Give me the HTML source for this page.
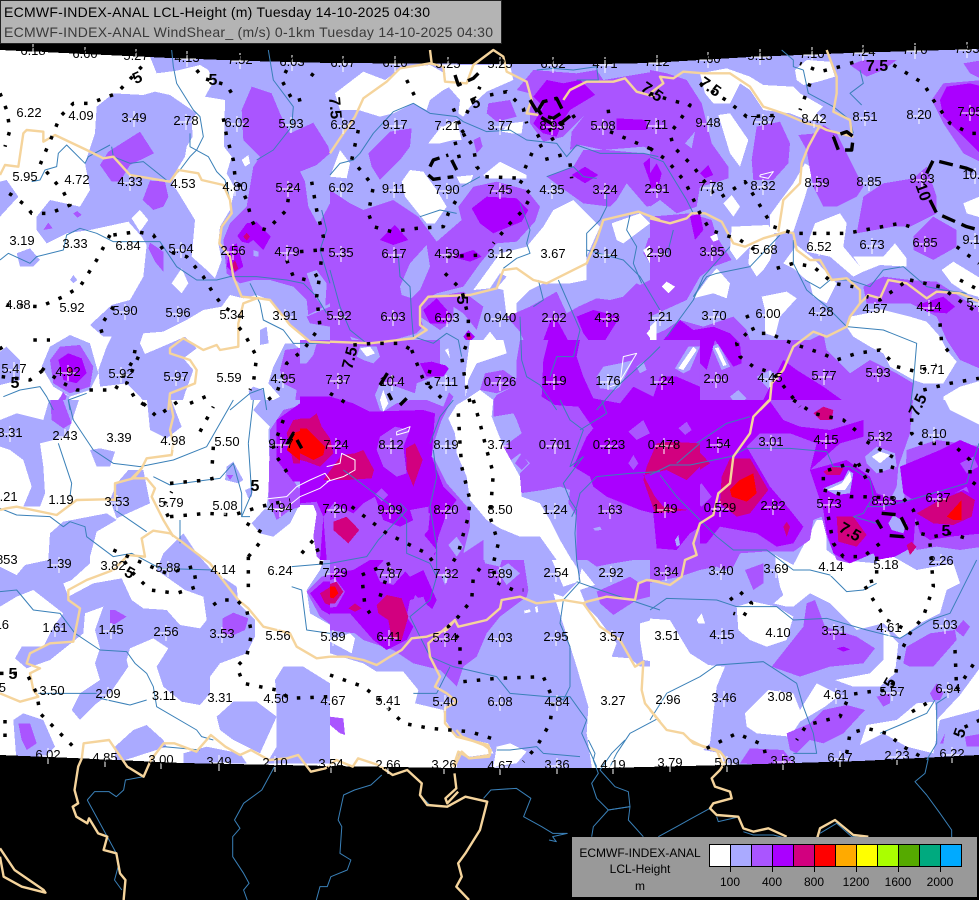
<!DOCTYPE html>
<html><head><meta charset="utf-8"><title>ECMWF-INDEX-ANAL LCL-Height</title>
<style>
html,body{margin:0;padding:0;background:#000}
svg{display:block}
text{font-family:"Liberation Sans",sans-serif;font-size:13px;text-anchor:middle;fill:#000}
.bt{font-weight:bold;font-size:16px}
polygon{shape-rendering:crispEdges}
.w{fill:#fff}.l{fill:#aaaaff}.p{fill:#aa55ff}.v{fill:#aa00ff}.m{fill:#d2007f}.o{fill:#ff0000}
polyline{fill:none;vector-effect:non-scaling-stroke;stroke-linejoin:round}
.b{stroke:#f5d49c;stroke-width:2.4}
.r{stroke:#3a80b8;stroke-width:1}
.d{stroke:#000;stroke-width:3.5;stroke-dasharray:3.5 10}
.k{stroke:#000;stroke-width:3.4;stroke-dasharray:14 7}
.c{stroke:#fff;stroke-width:1}
</style></head><body>
<svg xmlns="http://www.w3.org/2000/svg" width="979" height="900" viewBox="0 0 979 900">
<defs>
<clipPath id="ca"><rect x="0" y="0" width="330" height="400"/></clipPath>
<clipPath id="cb"><rect x="330" y="0" width="320" height="400"/></clipPath>
<clipPath id="cc"><rect x="650" y="0" width="329" height="400"/></clipPath>
<clipPath id="cd"><rect x="0" y="400" width="330" height="400"/></clipPath>
<clipPath id="ce"><rect x="330" y="400" width="320" height="400"/></clipPath>
<clipPath id="cf"><rect x="650" y="400" width="329" height="400"/></clipPath>
<clipPath id="cg"><rect x="300" y="340" width="400" height="220"/></clipPath>
<path id="x" d="M-9 1h18M0-7v16" stroke="#fff" stroke-width="1" fill="none"/>
</defs>
<rect width="979" height="900" fill="#000"/>

<!-- tile A -->
<g clip-path="url(#ca)"><g transform="translate(0,50) scale(.33333)">
<rect x="0" y="-150" width="990" height="1300" class="w"/>
<polygon class="l" points="290,170 340,130 430,135 465,125 510,135 590,190 575,210 578,260 560,290 555,320 530,360 515,405 530,420 585,510 575,620 620,660 645,685 665,630 655,580 660,530 690,480 705,415 680,370 695,320 672,290 675,150 615,140 640,95 625,60 600,45 530,62 470,70 450,20 990,20 990,1080 760,1080 745,1020 650,800 610,780 560,810 490,845 430,850 420,880 435,912 510,880 555,860 590,895 550,925 580,960 555,1030 540,1080 450,1080 420,1040 380,1000 300,1010 295,960 320,890 335,860 310,860 270,825 335,765 390,750 430,680 440,585 425,560 385,515 270,540 200,550 140,580 110,540 110,500 150,450 240,470 270,420 255,340 285,250"/>
<polygon class="w" points="610,780 665,770 690,735 730,745 770,735 810,750 850,805 900,850 925,880 935,900 915,910 880,880 855,880 845,900 820,950 805,1000 840,1040 800,1060 790,1020 760,1010 740,1030 740,1090 560,1090 580,960 550,925 590,895 555,860 490,845 560,810"/>
<polygon class="w" points="395,505 420,480 445,510 420,545"/>
<polygon class="w" points="515,700 545,655 565,700 545,730"/>
<polygon class="w" points="725,330 745,315 750,340 735,350"/>
<polygon class="l" points="125,950 150,890 210,855 270,880 295,970 270,1020 210,1040 160,1010"/>
<polygon class="l" points="190,1030 210,1040 200,1060 195,1090 140,1090"/>
<polygon class="l" points="0,395 20,390 55,440 0,500"/>
<polygon class="l" points="50,610 90,595 120,630 100,650 60,650"/>
<polygon class="l" points="210,690 220,675 232,690 220,700"/>
<polygon class="l" points="0,905 20,890 60,930 60,990 0,1005"/>
<polygon class="l" points="780,840 800,830 806,880 780,885"/>
<polygon class="p" points="300,345 325,305 420,245 462,310 390,345 360,395 335,395"/>
<polygon class="p" points="428,450 450,392 495,395 505,440 490,470 460,480"/>
<polygon class="p" points="130,540 145,518 158,535"/>
<polygon class="p" points="220,490 232,483 245,495 232,503"/>
<polygon class="p" points="445,595 450,578 490,605 490,665 465,635"/>
<polygon class="p" points="725,180 755,110 815,130 840,190 870,250 940,218 985,290 990,310 950,345 900,365 915,395 925,470 955,525 990,460 990,760 925,795 920,750 880,710 810,690 760,690 720,700 680,670 670,570 690,520 740,470 760,350 780,320 730,270"/>
<polygon class="l" points="920,670 950,660 980,700 975,780 945,740"/>
<polygon class="l" points="760,600 775,605 775,620 760,618"/>
<polygon class="p" points="920,800 990,770 990,830 930,820"/>
<polygon class="p" points="855,900 990,880 990,1090 880,1090 890,1020 850,1000 840,960"/>
<polygon class="p" points="155,1090 190,1025 200,1040 180,1090"/>
<polygon class="p" points="150,930 180,890 240,885 280,950 270,1010 210,1030 160,1000"/>
<polygon class="v" points="175,930 205,910 245,925 260,970 230,1000 190,990"/>
<polygon class="m" points="200,960 208,952 216,962 208,972"/>
<polygon class="v" points="712,558 740,520 770,515 812,560 790,600 760,570 745,580 725,575"/>
<polygon class="m" points="730,560 740,548 750,560 740,572"/>
<polygon class="v" points="690,590 710,580 730,650 700,670 680,650"/>
<polygon class="m" points="695,645 705,630 715,655 705,665"/>
<polygon class="v" points="885,1090 910,1050 990,1040 990,1090"/>
</g></g>

<!-- tile B -->
<g clip-path="url(#cb)"><g transform="translate(330,50) scale(.33333)">
<rect x="-10" y="-50" width="1010" height="1150" class="l"/>
<polygon class="w" points="15,130 100,65 165,90 215,55 300,45 345,70 360,110 340,120 300,150 290,180 250,160 190,190 150,200 85,180 30,180"/>
<polygon class="w" points="340,45 540,45 550,90 470,125 420,170 400,200 385,190 390,150 355,110"/>
<polygon class="w" points="295,280 330,235 380,210 395,270 370,270 330,280"/>
<polygon class="w" points="515,245 540,220 580,215 575,250 545,250"/>
<polygon class="w" points="0,380 30,300 60,340 50,385"/>
<polygon class="w" points="215,395 240,360 280,365 320,420 350,470 315,520 290,520 265,490 225,440"/>
<polygon class="w" points="380,380 430,375 420,400 390,400"/>
<polygon class="w" points="460,375 510,335 590,375 590,385 470,385"/>
<polygon class="w" points="240,725 250,665 268,710 262,735"/>
<polygon class="w" points="430,720 510,610 590,590 640,530 670,480 730,450 810,530 770,620 770,690 720,700 640,700 600,720 560,760 560,785 600,810 570,845 530,800 520,720 500,715 530,680 510,670 480,715"/>
<polygon class="w" points="845,520 930,490 960,520 880,580 860,570"/>
<polygon class="p" points="955,565 1000,540 1000,700 960,640 940,610"/>
<polygon class="w" points="940,600 975,575 985,640 960,640"/>
<polygon class="p" points="900,720 960,690 1000,700 1000,780"/>
<polygon class="w" points="990,800 950,860 990,880"/>
<polygon class="w" points="380,1090 410,1000 420,920 480,845 530,910 470,940 460,1000 480,1040 480,1090"/>
<polygon class="w" points="90,900 110,890 135,910 120,920"/>
<polygon class="w" points="345,910 355,895 365,930"/>
<polygon class="w" points="150,1050 165,1030 170,1090 150,1070"/>
<polygon class="p" points="610,60 740,70 800,60 820,90 1000,60 1000,310 940,290 820,300 750,285 720,300 725,245 760,200 700,260 640,275 600,220 600,130 560,120"/>
<polygon class="p" points="650,380 730,350 760,300 830,300 940,310 1000,320 1000,460 950,470 890,400 860,450 840,470 760,460 690,410"/>
<polygon class="p" points="475,160 540,150 560,200 500,215 470,190"/>
<polygon class="p" points="115,310 180,245 245,235 240,290 210,330 150,390 125,350"/>
<polygon class="p" points="430,270 450,260 458,290 440,310"/>
<polygon class="p" points="0,420 60,460 100,480 190,450 265,500 320,575 395,510 385,470 430,410 500,395 590,420 630,470 615,515 560,575 500,580 450,640 400,710 320,730 290,745 270,800 280,830 260,850 190,870 120,880 60,860 0,880"/>
<polygon class="l" points="210,710 240,640 290,585 300,650 270,720 245,745 215,735"/>
<polygon class="p" points="270,800 290,745 400,725 460,770 440,840 400,790 370,770 370,810 330,840"/>
<polygon class="p" points="0,880 60,860 70,880 40,910 70,980 30,1020 0,1000"/>
<polygon class="p" points="140,930 200,920 210,960 150,960"/>
<polygon class="p" points="230,960 290,930 360,930 390,1010 350,1060 300,1040 260,1010"/>
<polygon class="p" points="600,770 680,725 710,790 745,770 800,745 840,750 880,740 920,700 960,720 1000,770 1000,1090 400,1090 480,1010 460,1040 600,1000 640,1010 570,845 530,800"/>
<polygon class="p" points="440,1030 480,940 560,930 610,950 600,1000 520,1040"/>
<polygon class="l" points="810,950 840,930 880,910 940,960 870,1010 810,1010"/>
<polygon class="l" points="760,880 775,890 770,905 762,900"/>
<polygon class="w" points="950,850 990,800 1000,880 980,890"/>
<polygon class="v" points="425,475 470,440 560,445 595,480 575,515 490,550 450,520"/>
<polygon class="v" points="150,570 195,525 235,570 190,585"/>
<polygon class="v" points="365,620 430,600 455,620 420,635"/>
<polygon class="v" points="280,780 320,745 360,790 350,820 300,820"/>
<polygon class="v" points="400,860 415,840 435,860 415,880"/>
<polygon class="m" points="410,860 418,852 426,862 416,872"/>
<polygon class="v" points="270,950 310,935 360,950 350,985 300,980"/>
<polygon class="v" points="740,800 790,780 870,800 820,880 790,890 760,850"/>
<polygon class="v" points="640,870 670,790 730,900 750,1000 720,1090 630,1090"/>
<polygon class="v" points="470,990 510,965 550,985 540,1010 490,1020"/>
<polygon class="v" points="860,205 950,210 950,240 860,240"/>
<polygon class="v" points="940,340 975,310 1000,320 1000,410 960,395"/>
<polygon class="v" points="725,375 765,350 805,375 765,400"/>
<polygon class="v" points="650,90 700,100 750,90 795,135 720,180 700,210 680,260 640,250 610,220 640,170 610,140"/>
<polygon class="v" points="780,1030 900,1020 930,1090 790,1090"/>
<polygon class="v" points="0,1050 40,1060 60,1090 0,1090"/>
</g></g>

<!-- tile C -->
<g clip-path="url(#cc)"><g transform="translate(650,50) scale(.33333)">
<rect x="-10" y="-50" width="1010" height="1150" class="l"/>
<polygon class="w" points="150,70 230,55 300,80 340,105 430,110 450,130 520,170 500,190 530,215 470,210 420,190 340,180 300,120 270,100 240,160 190,160 165,130"/>
<polygon class="w" points="435,60 470,30 540,35 555,80 505,95 460,105 440,90"/>
<polygon class="w" points="205,195 240,190 295,270 270,350 240,310"/>
<polygon class="w" points="360,495 400,440 430,400 465,340 490,355 465,440 430,545 360,550"/>
<polygon class="w" points="220,460 245,435 270,470 250,500"/>
<polygon class="w" points="245,530 355,525 380,560 360,630 340,660 320,680 295,640 300,590 260,630 240,600"/>
<polygon class="w" points="495,520 570,490 590,520 580,590 630,650 640,665 610,680 540,620 470,605 480,560"/>
<polygon class="w" points="610,620 700,620 735,580 770,625 770,650 690,645 640,665"/>
<polygon class="w" points="400,640 440,585 490,625 560,700 530,760 490,740 480,700 430,655"/>
<polygon class="w" points="335,740 410,725 440,745 390,800 375,860 345,850 345,780"/>
<polygon class="w" points="170,690 200,655 240,700 230,745 190,730 130,745"/>
<polygon class="w" points="35,710 50,695 75,710 55,730"/>
<polygon class="w" points="875,660 910,635 1000,690 1000,745 950,730 905,700"/>
<polygon class="w" points="940,460 1000,435 1000,505 950,490"/>
<polygon class="w" points="600,800 700,780 780,800 830,815 870,860 890,900 920,935 880,1000 820,1000 790,990 720,950 700,910 660,890 610,860 590,830"/>
<polygon class="w" points="880,1040 930,1010 1000,990 1000,1090 885,1090"/>
<polygon class="p" points="0,60 50,70 110,90 155,160 185,280 235,350 235,385 190,400 150,410 140,470 80,490 30,450 0,470"/>
<polygon class="l" points="105,280 135,245 125,295"/>
<polygon class="p" points="0,500 120,490 185,510 200,560 245,630 190,650 150,680 110,750 0,800"/>
<polygon class="w" points="35,710 50,695 75,710 55,730"/>
<polygon class="p" points="0,860 45,840 90,810 160,830 250,800 290,840 300,870 400,870 480,870 520,850 530,900 600,970 660,930 740,970 790,1000 780,1090 0,1090"/>
<polygon class="p" points="490,410 480,360 470,300 445,255 500,250 520,225 560,250 620,370 640,410 620,440 560,470 520,470"/>
<polygon class="p" points="305,330 320,230 390,215 420,280 415,340 370,390 310,390"/>
<polygon class="p" points="620,550 640,440 700,400 790,385 830,350 860,440 860,490 780,530 730,530"/>
<polygon class="p" points="790,560 850,500 920,540 920,590 850,630 790,600"/>
<polygon class="p" points="845,150 880,100 1000,90 1000,340 940,310 880,220"/>
<polygon class="p" points="940,40 1000,30 1000,90 960,70"/>
<polygon class="p" points="600,45 640,30 740,30 700,60 650,80"/>
<polygon class="p" points="640,710 700,680 780,690 860,695 960,760 1000,780 1000,960 930,930 890,870 860,800 780,760 720,760 650,760"/>
<polygon class="l" points="90,950 120,880 150,890 110,960"/>
<polygon class="w" points="100,935 125,895 135,900 110,945"/>
<polygon class="l" points="185,890 205,880 240,950 215,960"/>
<polygon class="w" points="195,895 205,892 230,945 220,948"/>
<polygon class="l" points="240,1040 265,1020 290,1045 265,1070"/>
<polygon class="l" points="320,980 360,960 395,990 360,1020"/>
<polygon class="w" points="0,830 20,810 20,880 0,890"/>
<polygon class="w" points="180,560 200,550 205,570 190,575"/>
<polygon class="v" points="880,200 870,150 890,110 960,100 1000,110 1000,320 930,250"/>
<polygon class="v" points="0,370 20,340 35,370 25,410 0,415"/>
<polygon class="v" points="120,500 150,490 160,540 135,570"/>
<polygon class="v" points="150,370 175,345 190,375 165,385"/>
<polygon class="v" points="40,870 90,810 130,840 190,830 240,850 270,880 275,940 250,950 195,870 170,960 150,940 130,880 100,890 80,960 40,900"/>
<polygon class="v" points="0,1000 70,960 110,990 130,1010 110,1090 0,1090"/>
<polygon class="v" points="320,1090 400,930 440,960 520,1010 590,1060 640,1090"/>
<polygon class="m" points="490,1090 520,1065 550,1090"/>
<polygon class="v" points="800,765 880,740 915,770 890,790 830,785"/>
</g></g>

<!-- tile D -->
<g clip-path="url(#cd)"><g transform="translate(0,400) scale(.33333)">
<rect x="0" y="-10" width="1000" height="1200" class="w"/>
<polygon class="l" points="0,60 50,40 130,60 150,-10 240,-10 200,110 120,130 130,200 135,280 120,320 70,320 95,260 70,180 30,150 0,140"/>
<polygon class="p" points="150,-10 185,-10 215,70 190,85 155,60"/>
<polygon class="l" points="270,150 300,145 345,155 330,200 290,200"/>
<polygon class="l" points="350,250 385,210 430,210 450,310 350,355 330,300"/>
<polygon class="l" points="440,-10 510,-10 545,80 500,115 450,90"/>
<polygon class="l" points="680,200 700,185 730,240 715,250 675,240"/>
<polygon class="p" points="680,225 700,225 690,240"/>
<polygon class="l" points="735,270 760,260 755,290 745,295"/>
<polygon class="l" points="470,510 490,460 530,420 550,400 590,460 635,510 710,560 715,610 765,660 765,710 740,760 660,790 630,830 630,880 600,915 545,905 490,860 470,800 505,745 460,715 390,745 380,780 385,800 330,880 290,910 240,960 215,930 240,880 300,840 285,790 300,745 285,690 310,620 255,640 250,700 225,720 150,780 80,805 45,775 65,740 130,740 160,680 190,640 100,570 50,590 0,620 0,500 50,525 75,495 145,480 150,400 190,365 320,340 350,360 290,395 270,470 270,490 215,540 190,550 205,590 280,550 365,535 395,600 430,625 500,630 540,675 600,685 620,660 610,590 555,570"/>
<polygon class="p" points="330,630 345,630 380,650 345,672 330,670"/>
<polygon class="p" points="668,655 700,638 745,655 735,690 690,710 668,700"/>
<polygon class="l" points="650,950 700,905 770,905 830,950 780,1060 700,1020 660,990"/>
<polygon class="l" points="825,840 850,800 910,800 990,850 1000,1090 800,1090 830,1040 830,900"/>
<polygon class="l" points="40,960 70,940 130,960 165,1040 120,1090 50,1090"/>
<polygon class="p" points="55,970 90,970 110,1030 80,1050 65,1020"/>
<polygon class="l" points="345,1040 400,990 440,975 490,1020 500,1040 345,1090"/>
<polygon class="l" points="550,1060 620,1040 720,1060 740,1090 550,1090"/>
<polygon class="l" points="945,330 975,310 1000,310 1000,680 930,640 920,570 960,510 975,470 965,400"/>
<polygon class="p" points="975,310 1000,310 1000,480 975,400"/>
<polygon class="l" points="850,-10 1000,-10 1000,320 900,310 870,370 820,410 780,400 755,370 800,320 810,230 805,90"/>
<polygon class="l" points="760,30 790,-10 850,-10 810,80 790,60"/>
<polygon class="p" points="810,90 850,30 1000,-10 1000,290 870,330 830,360 805,300"/>
<polygon class="l" points="880,240 925,230 920,262 895,265"/>
<polygon class="v" points="830,180 830,60 900,10 1000,-10 1000,240 880,245"/>
<polygon class="m" points="860,100 880,60 940,50 1000,90 1000,245 930,250 960,190 920,190 880,190"/>
<polygon class="o" points="860,150 880,100 920,85 975,150 960,185 910,190"/>
<polygon class="p" points="920,575 965,530 1000,520 1000,680 960,650"/>
<polygon class="v" points="930,580 970,545 1000,545 1000,650 965,630"/>
<polygon class="m" points="960,580 1000,555 1000,620 975,610"/>
</g></g>

<!-- tile E -->
<g clip-path="url(#ce)"><g transform="translate(330,400) scale(.33333)">
<rect x="-10" y="-10" width="1010" height="1200" class="l"/>
<polygon class="w" points="350,60 400,-10 490,-10 490,70 520,180 575,250 580,280 610,310 640,330 670,390 745,510 745,545 700,560 640,420 580,370 500,380 450,350 430,290 390,180 345,120"/>
<polygon class="w" points="670,580 700,590 745,545 755,505 795,555 750,570 770,620 800,650 860,730 845,770 900,775 930,800 1000,800 1000,1200 800,1200 770,1000 775,920 740,800 705,690"/>
<polygon class="w" points="930,670 1000,650 1000,790 940,780 930,720"/>
<polygon class="l" points="870,720 890,700 890,770 850,770"/>
<polygon class="w" points="0,720 60,700 75,715 65,760 0,725"/>
<polygon class="w" points="0,760 100,790 140,815 220,815 265,870 255,910 340,930 345,960 380,1010 475,1030 490,1060 420,1070 385,1055 370,1200 0,1200"/>
<polygon class="w" points="500,1040 540,1030 590,1055 560,1090 490,1100"/>
<polygon class="p" points="0,950 40,955 45,1005 30,1000 0,975"/>
<polygon class="p" points="-10,-10 340,-10 310,50 300,200 370,290 410,330 440,360 465,490 510,500 530,430 580,470 595,570 590,590 510,650 470,700 440,770 400,800 380,860 330,810 250,790 190,750 100,720 75,700 -10,690"/>
<polygon class="l" points="355,430 380,405 405,440 380,465"/>
<polygon class="w" points="375,430 385,430 382,438"/>
<polygon class="l" points="500,510 535,490 570,520 530,555"/>
<polygon class="p" points="555,40 590,-10 1000,-10 1000,400 970,440 910,480 850,490 800,500 730,450 720,400 700,330 650,240 640,200 600,120 570,90"/>
<polygon class="v" points="-10,520 70,510 120,480 180,465 240,530 280,510 320,600 300,640 280,590 240,600 230,650 250,680 230,720 170,750 130,720 60,640 -10,640"/>
<polygon class="l" points="340,520 355,535 345,555 335,530"/>
<polygon class="p" points="135,510 175,465 230,510 190,555 150,545"/>
<polygon class="p" points="240,640 255,585 310,630 280,680 270,720"/>
<polygon class="m" points="55,625 75,610 95,625 75,635"/>
<polygon class="m" points="140,615 170,585 215,595 235,650 215,720 185,715 175,660 145,640"/>
<polygon class="p" points="-10,545 15,535 45,575 20,620 -10,625"/>
<polygon class="m" points="-10,555 20,545 40,575 15,610 -10,610"/>
<polygon class="o" points="-10,560 15,560 25,580 10,595 -10,590"/>
<polygon class="p" points="800,575 900,530 930,550 1000,530 1000,580 920,600 850,645 810,610"/>
<polygon class="w" points="582,632 600,628 602,636 584,640"/>
<polygon class="w" points="615,622 622,618 625,636 618,638"/>
</g></g>

<!-- tile F -->
<g clip-path="url(#cf)"><g transform="translate(650,400) scale(.33333)">
<rect x="-10" y="-10" width="1010" height="1200" class="l"/>
<polygon class="w" points="880,-10 1000,-10 1000,80 900,30"/>
<polygon class="w" points="375,465 430,495 500,360 530,360 530,450 570,480 680,490 695,430 700,400 730,470 800,510 910,490 930,550 890,570 870,640 810,670 750,715 700,670 620,690 540,610 480,580 430,620 410,620 370,610 360,620 400,585 390,560 380,510"/>
<polygon class="w" points="260,620 310,605 380,620 430,650 410,720 350,740 300,720 265,690"/>
<polygon class="w" points="140,660 155,640 165,670 145,670"/>
<polygon class="w" points="-10,655 60,660 120,760 175,795 225,800 200,860 190,940 180,1030 160,1050 215,1060 250,1200 -10,1200"/>
<polygon class="w" points="700,680 745,730 735,820 690,860 610,860 555,840 660,820 700,780 700,730"/>
<polygon class="w" points="285,940 355,870 430,880 450,930 500,850 570,885 525,920 450,965 420,1010 320,1000 290,980"/>
<polygon class="w" points="630,1035 650,975 740,960 800,910 855,905 860,960 930,885 1000,790 1000,925 870,960 850,1060 770,1040 700,1000"/>
<polygon class="p" points="-10,-10 790,-10 780,100 745,200 740,260 700,340 690,420 660,460 600,490 560,480 530,410 515,350 490,360 480,420 430,455 340,455 270,460 250,500 220,510 200,500 150,510 90,530 -10,550"/>
<polygon class="p" points="770,150 860,120 1000,140 1000,440 930,450 860,440 800,450 760,370"/>
<polygon class="p" points="285,510 340,490 340,550 310,570"/>
<polygon class="l" points="645,170 680,140 735,160 740,200 680,220 650,190"/>
<polygon class="w" points="665,170 690,155 720,165 690,190"/>
<polygon class="v" points="-10,-10 350,-10 400,60 450,80 540,90 640,60 640,110 570,130 480,210 500,130 420,100 330,100 290,140 360,260 420,330 460,380 430,430 380,440 320,400 210,380 170,430 130,430 60,440 -10,440"/>
<polygon class="v" points="480,210 590,180 660,230 680,280 740,300 800,300 790,440 735,470 680,480 670,460 600,490 550,460 530,400 520,330"/>
<polygon class="v" points="750,200 870,150 930,120 1000,150 1000,300 970,310 950,260 860,310 800,330 790,300 760,280"/>
<polygon class="v" points="790,330 860,300 940,270 1000,300 1000,400 900,410 840,420 810,400"/>
<polygon class="p" points="85,90 105,65 125,90 105,105"/>
<polygon class="p" points="125,280 155,250 185,290 155,320 130,300"/>
<polygon class="p" points="360,220 400,200 470,240 410,280 380,250"/>
<polygon class="p" points="75,425 85,410 90,435 80,440"/>
<polygon class="p" points="930,190 970,170 985,200 950,220"/>
<polygon class="m" points="-10,170 40,140 120,125 180,190 110,235 60,190 -10,225"/>
<polygon class="m" points="215,230 240,175 300,175 355,270 300,340 260,350 210,310"/>
<polygon class="o" points="240,270 270,240 310,220 320,280 290,305 245,290"/>
<polygon class="m" points="490,40 520,20 550,30 545,60 510,60"/>
<polygon class="m" points="560,350 610,350 650,405 620,440 565,425"/>
<polygon class="m" points="800,340 870,300 935,275 975,300 965,350 910,375 850,370"/>
<polygon class="o" points="890,350 935,300 935,360 910,360"/>
<polygon class="m" points="520,215 550,200 580,205 570,225 530,225"/>
<polygon class="m" points="400,380 410,365 420,380 410,410"/>
<polygon class="m" points="-10,330 45,320 110,330 45,340"/>
<polygon class="m" points="-10,240 40,230 60,280 60,330 20,340 -10,340"/>
<polygon class="l" points="520,265 580,240 595,210 610,220 600,280 560,285"/>
<polygon class="w" points="530,270 575,250 600,215 605,240 585,270"/>
<polygon class="l" points="715,370 730,345 770,370 760,400 725,390"/>
<polygon class="m" points="770,435 785,425 800,440 780,465"/>
<polygon class="p" points="365,800 460,680 470,610 495,600 525,680 620,710 675,745 640,790 540,800 450,830"/>
<polygon class="v" points="560,745 580,740 600,748 580,755"/>
<polygon class="p" points="760,790 770,740 840,700 915,690 920,720 850,800 780,800"/>
<polygon class="p" points="915,690 940,660 960,680 940,710"/>
<polygon class="p" points="410,1000 480,970 520,930 590,915 645,930 580,1000 520,1030 480,1020 440,1060 420,1050"/>
<polygon class="p" points="680,890 720,880 720,910 700,920"/>
<polygon class="p" points="840,880 860,850 880,880 870,900 850,900"/>
<polygon class="p" points="270,1090 300,1045 400,1050 440,1100"/>
<polygon class="p" points="870,1030 885,1000 880,1030"/>
<polygon class="p" points="945,1010 1000,1000 1000,1040 950,1040"/>
</g></g>

<!-- central overlay tile (300,340 400x220) -->
<g clip-path="url(#cg)"><g transform="translate(300,340) scale(.33333)">
<rect x="0" y="0" width="1200" height="660" class="p"/>
<polygon class="l" points="0,10 50,10 40,45 20,70 0,70"/>
<polygon class="l" points="170,50 180,20 230,20 240,50 220,70 190,60"/>
<polygon class="w" points="180,25 210,20 225,40 200,50"/>
<polygon class="l" points="225,165 240,130 290,140 345,160 350,130 400,110 420,120 440,140 450,150 430,200 380,180 330,180 290,190 250,215 240,210"/>
<polygon class="l" points="420,0 660,0 650,60 650,110 640,140 590,165 580,180 580,230 640,220 650,240 665,280 610,320 620,370 660,340 690,370 660,400 660,460 730,450 780,440 810,450 805,490 830,530 830,660 510,660 450,590 460,570 500,560 510,510 440,430 405,360 395,350 405,300 425,240 440,210 460,170 420,130"/>
<polygon class="p" points="555,100 610,90 645,115 640,140 590,160 540,150"/>
<polygon class="p" points="645,370 665,340 685,370 665,390"/>
<polygon class="p" points="400,420 440,470 480,510 510,520 510,560 490,640 550,600 550,660 400,660"/>
<polygon class="l" points="445,615 470,590 490,620 470,650"/>
<polygon class="v" points="0,170 90,170 160,190 210,215 370,210 405,220 395,350 430,440 470,480 440,520 415,590 405,645 370,620 360,600 385,570 390,520 330,510 340,540 300,560 250,540 225,470 190,490 160,520 100,490 70,530 80,660 0,660"/>
<polygon class="p" points="230,330 240,290 285,260 330,270 310,320 320,400 290,410 250,380"/>
<polygon class="p" points="225,465 245,445 265,465 245,485"/>
<polygon class="p" points="330,510 385,500 385,550 345,560"/>
<polygon class="p" points="335,600 360,570 410,630 390,660 330,640"/>
<polygon class="p" points="0,490 50,485 70,530 60,660 0,660"/>
<polygon class="w" points="0,495 40,495 50,520 40,590 50,650 60,660 0,660"/>
<polygon class="m" points="0,235 30,235 50,220 65,260 90,295 100,340 60,380 20,365 0,360"/>
<polygon class="o" points="0,265 20,265 75,320 70,345 40,360 0,340"/>
<polygon class="m" points="70,420 125,345 165,340 190,330 222,390 215,415 140,420"/>
<polygon class="m" points="318,325 345,310 368,360 340,440 320,390"/>
<polygon class="m" points="100,545 140,530 178,570 145,610 100,570"/>
<polygon class="v" points="725,170 730,60 745,0 840,0 830,50 850,110 880,175 960,190 1000,140 1060,170 1080,110 1130,110 1200,140 1200,560 1170,580 1130,630 1070,625 1060,520 1020,510 920,470 880,440 870,410 820,380 860,290 880,265 835,200 765,195"/>
<polygon class="p" points="985,275 1030,240 1050,280 1010,300"/>
<polygon class="p" points="1135,265 1160,245 1175,270 1155,285"/>
<polygon class="p" points="985,370 1000,345 1015,370 1000,390"/>
<polygon class="l" points="890,110 910,80 960,70 1000,60 960,140 945,150 900,145"/>
<polygon class="l" points="1010,80 1030,65 1040,90 1020,100"/>
<polygon class="l" points="1125,85 1165,20 1200,20 1170,90 1150,100"/>
<polygon class="w" points="1135,85 1180,20 1190,30 1150,90"/>
<polygon class="m" points="1040,380 1070,310 1110,305 1200,310 1200,380 1160,420 1100,390 1030,405 1065,470 1090,500 1165,510 1065,520 1030,420"/>
<polygon class="v" points="360,70 395,65 450,80 430,110 380,110"/>
<polygon class="l" points="420,20 450,20 470,40 460,100 430,70"/>
<polygon class="w" points="435,30 445,25 450,55"/>
<polygon class="w" points="240,180 250,150 265,190 250,215"/>
<polygon class="w" points="495,110 510,0 610,0 620,40 530,70 505,120 497,170"/>
<polygon class="w" points="445,235 470,195 495,180 540,150 580,180 575,230 610,320 660,410 665,470 720,490 750,540 780,600 815,660 770,660 720,590 660,590 600,565 560,540 510,480 500,410 470,340 465,280"/>
<polygon class="l" points="880,565 900,560 905,570 885,572"/>
<polygon class="l" points="1125,600 1135,585 1140,615 1130,620"/>
</g></g>

<!-- thin white contours -->
<g transform="translate(330,400) scale(.33333)">
<polyline class="c" points="-10,200 30,190 35,160 75,180 75,210 40,230 -10,245"/>
<polyline class="c" points="200,95 240,80 235,95 200,105 200,95"/>
</g>
<g transform="translate(0,400) scale(.33333)">
<polyline class="c" points="770,300 860,290 890,260 930,240 975,220 990,240 960,265 900,290 850,330 780,325"/>
</g>
<g transform="translate(650,50) scale(.33333)"><polyline class="c" points="330,375 370,365 355,385 330,380 330,375"/></g>
<g transform="translate(330,50) scale(.33333)"><polyline class="c" points="840,1010 870,1000 880,920 920,910 890,960 860,1010"/></g>

<!-- outside-domain black -->
<polygon fill="#000" points="0,0 979,0 979,49 850,53 750,57 650,63 600,64 500,64 330,63 250,61 170,58 85,54 0,50"/>
<polygon fill="#000" points="0,755 73,758 182,763 330,766 455,768 603,768 727,765 860,761 979,755 979,900 0,900"/>

<!-- rivers -->
<g transform="translate(0,50) scale(.33333)">
<polyline class="r" points="515,0 520,50 530,100 580,180 600,200 610,260 590,300 570,320 540,360 530,370"/>
<polyline class="r" points="570,250 570,290 625,320 650,365 675,390 690,450"/>
<polyline class="r" points="805,0 820,90 880,170 875,230 820,300 770,330"/>
<polyline class="r" points="330,285 265,320 255,340 200,285 175,310 170,350 135,360 120,390 95,395"/>
<polyline class="r" points="335,290 340,320 390,340 430,335 505,395"/>
<polyline class="r" points="0,630 25,610 90,640 110,620 190,600 200,555 240,535 290,550 340,575 480,575 510,620 530,650 590,690 650,690 690,680 770,680 860,690 910,700 950,740 980,790"/>
<polyline class="r" points="10,1040 60,1020 120,1010 140,1040 160,1080"/>
<polyline class="r" points="210,1080 205,1050 260,1030"/>
<polyline class="r" points="690,1080 750,1030 790,1015 800,1080"/>
<polyline class="r" points="750,700 780,760 790,810 850,840 880,880 920,880 990,880"/>
<polyline class="r" points="965,480 980,540 960,600 990,700"/>
</g>
<g transform="translate(330,50) scale(.33333)">
<polyline class="r" points="0,375 30,340 70,330 90,310 130,250 190,185 250,160 300,190 380,200 400,215 470,245 540,240 590,270 680,280 710,320 740,285 810,310 940,310 985,320"/>
<polyline class="r" points="380,490 330,480 270,500"/>
<polyline class="r" points="395,410 450,380"/>
<polyline class="r" points="570,460 600,540 590,580 600,610 560,625 520,655"/>
<polyline class="r" points="205,615 210,680 240,710 245,800 250,860 310,880 350,850 385,870 395,920"/>
<polyline class="r" points="570,800 575,930 590,980 630,1005 680,1080"/>
<polyline class="r" points="625,690 640,750 610,770"/>
<polyline class="r" points="685,690 720,770 750,840 730,920 680,920 660,980"/>
<polyline class="r" points="770,600 880,630 930,680 990,780"/>
<polyline class="r" points="800,1080 860,1010 960,920 990,890"/>
<polyline class="r" points="0,660 30,770 60,840 110,880"/>
<polyline class="r" points="900,495 890,540 920,590 910,640 935,700"/>
<polyline class="r" points="830,430 830,470 810,510 770,550 770,620"/>
<polyline class="r" points="650,380 730,350 760,380 800,385"/>
<polyline class="r" points="620,60 670,55 730,60 800,50 805,90 740,90"/>
</g>
<g transform="translate(650,50) scale(.33333)">
<polyline class="r" points="0,320 40,335 110,450 130,490"/>
<polyline class="r" points="70,540 50,620"/>
<polyline class="r" points="460,60 475,130 550,170 600,210 610,250"/>
<polyline class="r" points="630,60 640,100 600,130 635,165"/>
<polyline class="r" points="395,0 430,30 430,50 460,60"/>
<polyline class="r" points="240,590 160,680 130,750 50,860"/>
<polyline class="r" points="130,740 170,680 200,670 300,650 390,555"/>
<polyline class="r" points="430,570 430,640 470,720 530,770 590,830 700,840 800,880 790,1000 780,1080"/>
<polyline class="r" points="465,690 510,715 540,690 600,690 660,710 700,660 760,650 830,710 880,720 950,730"/>
</g>
<g transform="translate(0,400) scale(.33333)">
<polyline class="r" points="0,325 50,345 150,350 190,380 210,365 255,380 260,410 340,470 395,460 480,505 640,510"/>
<polyline class="r" points="175,130 215,250 210,290"/>
<polyline class="r" points="0,575 50,570 100,630 180,640 225,700 300,750 380,755 405,790 440,820 460,860 470,920 590,990 605,1010 640,1020"/>
<polyline class="r" points="345,330 440,395"/>
<polyline class="r" points="460,230 510,255 620,240 660,235 700,190 725,280 725,350"/>
<polyline class="r" points="540,360 540,430"/>
<polyline class="r" points="205,0 220,60 280,150 340,190 420,200 520,180 620,140 700,0"/>
<polyline class="r" points="745,130 760,0"/>
<polyline class="r" points="300,895 390,915 440,900"/>
<polyline class="r" points="115,880 210,880 290,880"/>
<polyline class="r" points="745,130 755,280 725,350 750,350"/>
<polyline class="r" points="875,560 905,570 920,690 990,700"/>
<polyline class="r" points="875,500 990,490"/>
<polyline class="r" points="490,1040 600,1050"/>
</g>
<g transform="translate(330,400) scale(.33333)">
<polyline class="r" points="300,130 330,50 370,0"/>
<polyline class="r" points="310,150 320,230 300,320 320,440 320,530 300,600 240,650 290,750 300,770 370,800 500,830 540,880 650,890 720,890 770,960 755,1000 800,1100"/>
<polyline class="r" points="0,490 110,470 145,420 230,330 210,310"/>
<polyline class="r" points="40,210 120,270 200,330 230,360 230,460 300,490 320,530"/>
<polyline class="r" points="360,800 320,880 250,880"/>
<polyline class="r" points="690,0 720,60 760,90 720,200 760,170 700,250 720,300 740,330 735,400 740,480 750,545 700,600 690,670 720,740 720,860 700,900 680,890"/>
<polyline class="r" points="990,215 900,220 800,230 750,280 740,320 725,350"/>
<polyline class="r" points="740,545 810,570 900,600 990,630"/>
<polyline class="r" points="985,955 900,1000 860,1060 840,1100"/>
<polyline class="r" points="500,1050 540,1050 620,1040 640,1060 750,1070"/>
<polyline class="r" points="815,0 830,40 750,90"/>
</g>
<g transform="translate(650,400) scale(.33333)">
<polyline class="r" points="0,225 60,195 120,195 240,170 290,145 420,145 530,155 550,200 600,200 660,240 670,290 640,340 610,350 680,370"/>
<polyline class="r" points="140,130 230,70 300,50"/>
<polyline class="r" points="80,190 150,130"/>
<polyline class="r" points="30,225 80,290 150,360 200,410 250,450 350,450 430,510 480,510 540,525 590,575 640,570 680,550"/>
<polyline class="r" points="0,630 50,595 200,600 260,620 380,620 430,660 530,655 650,690 750,715 840,660 900,640 945,550 980,480"/>
<polyline class="r" points="0,960 50,880 150,830 200,795 340,785 440,850 460,920 490,1000 500,1060 430,1060"/>
<polyline class="r" points="890,890 860,910 860,1030 830,1080"/>
<polyline class="r" points="650,320 700,320 780,300 950,250 970,180 987,130"/>
<polyline class="r" points="690,1000 750,975 830,940 855,900"/>
</g>
<g transform="translate(0,730) scale(.3636,.33333)">
<polyline class="r" points="755,110 720,180 670,220 645,270 660,295 640,320 640,380 670,430 685,460 670,480 680,510"/>
<polyline class="r" points="1050,135 1020,165 975,180 945,195 930,270 940,290 935,370 965,390 955,420 910,440 900,470 880,470 870,510"/>
<polyline class="r" points="240,210 260,185 300,185 320,200 340,180 345,150 395,140"/>
<polyline class="r" points="240,210 265,260 295,320 320,370 325,410 315,450 335,480"/>
<polyline class="r" points="1330,205 1350,180 1420,175 1460,205 1440,260 1490,290 1520,310 1560,310 1520,320 1530,335 1510,330"/>
<polyline class="r" points="1155,195 1185,228 1240,228"/>
</g>
<g transform="translate(560,740) scale(.33333)">
<polyline class="r" points="85,0 105,40 100,60 115,100 95,130 110,175 145,210 210,200 205,240 250,290"/>
<polyline class="r" points="195,0 155,40 120,90 165,140 205,155 210,200 145,210 100,260 95,290"/>
<polyline class="r" points="450,205 395,235 350,260 295,290"/>
<polyline class="r" points="1105,55 1095,100 1065,125 1100,165 1140,220 1175,270 1175,300"/>
<polyline class="r" points="470,230 475,245 530,232"/>
<polyline class="r" points="550,275 580,285 640,285 680,295"/>
<polyline class="r" points="780,280 830,250 875,290 925,295"/>
</g>

<!-- borders -->
<g transform="translate(0,50) scale(.33333)">
<polyline class="b" points="0,375 15,345 55,350 70,250 80,240 130,245 130,275 165,255 260,300 310,325 340,320 390,375 510,395 535,360 595,370 605,390 670,405 690,450 695,490 665,530 658,580 690,620 700,680 725,740 775,745 810,750 870,825 930,875 990,878"/>
<polyline class="b" points="505,1080 510,1030 585,1000 590,960 570,930 510,910 510,895 550,865 610,900 650,885 660,900 715,890 715,820 730,760 770,745"/>
</g>
<g transform="translate(330,50) scale(.33333)">
<polyline class="b" points="0,875 120,880 250,865 290,840 270,825 270,770 295,740 420,735 500,715 520,660 560,655 610,690 650,700 770,640 800,570 820,510 925,485 990,510"/>
<polyline class="b" points="0,310 30,265 75,200 100,145 170,95 210,55 300,40 340,50 345,95 410,100 430,45 490,0 520,20 530,65 590,95 605,150 590,190 625,195"/>
<polyline class="b" points="300,0 305,40"/>
<polyline class="b" points="700,150 720,120 770,95 850,95 885,85 920,125 975,140"/>
</g>
<g transform="translate(650,50) scale(.33333)">
<polyline class="b" points="0,505 60,520 110,505 125,490 165,490 215,515 250,580 285,590 340,565 410,545 430,550 440,600 480,630 510,630 545,690 590,685 630,720 630,760 600,800 590,830 530,860 490,845 430,890 400,960 365,1000 360,1050 330,1080"/>
<polyline class="b" points="0,130 40,100 30,80 70,85 100,65 160,70 240,70 270,90 300,110 340,170 400,190 470,220 510,230 530,240 610,260"/>
<polyline class="b" points="530,0 560,80 560,130 550,185 600,210 605,250"/>
<polyline class="b" points="510,225 475,290 455,340 450,400 400,450 385,545"/>
<polyline class="b" points="630,760 655,735 690,745 715,690 770,700 830,745 860,725 930,730 987,755"/>
</g>
<g transform="translate(650,400) scale(.33333)">
<polyline class="b" points="358,0 310,50 300,100 250,170 240,250 205,280 190,345 150,370 130,430 140,465 105,480 95,530 60,555 0,540"/>
<polyline class="b" points="0,930 50,990 100,1000 130,1030 200,1050 220,1100"/>
</g>
<g transform="translate(330,400) scale(.33333)">
<polyline class="b" points="990,545 950,540 925,550 915,600 830,590 770,605 760,610 700,600 620,610 570,590 515,600 510,625 470,660 385,680 375,660 350,690 290,710 245,715 215,750 180,770 140,795 100,780 50,770 0,770"/>
<polyline class="b" points="760,610 810,680 870,720 915,800 940,785 935,870 945,910 990,965"/>
<polyline class="b" points="375,660 340,690 295,730 300,770 330,830 315,860 350,880 380,905 345,925 345,970 380,1010 475,1035 480,1065 420,1075 385,1055 370,1100"/>
</g>
<g transform="translate(0,400) scale(.33333)">
<polyline class="b" points="990,770 950,775 890,740 870,700 790,680 745,625 715,600 630,490 590,460 545,425 510,400 460,392 425,415 435,470 385,465 340,510 260,540 205,570 205,600 240,625 220,725 150,730 90,760 80,790 120,805 90,820 100,870 115,890 60,905 0,880"/>
<polyline class="b" points="0,330 20,325 50,320 170,345 230,300 320,298 345,300 345,250 400,235 425,205 440,175 515,165 520,130 510,90 520,50 510,0"/>
<polyline class="b" points="425,205 395,235 440,235 465,265 455,290 470,320 490,360 520,410"/>
</g>
<g transform="translate(0,730) scale(.3636,.33333)">
<polyline class="b" points="225,85 215,110 205,180 215,220 200,230 210,260 240,280 245,265 270,310 295,320 285,360 320,370 330,430 345,450 340,510"/>
<polyline class="b" points="225,85 230,40 300,30 350,110 395,140 415,90 450,40 480,40 540,65 580,15 620,50 660,75 690,60 740,90 790,85 820,75 855,125 895,115 925,90 970,110 985,85 1040,105 1080,135 1120,120 1160,160 1155,195 1175,225 1230,230 1280,200 1340,215 1320,300 1280,370 1260,400 1270,440 1255,470 1290,510"/>
<polyline class="b" points="1250,130 1255,175 1225,205 1230,220 1260,185"/>
<polyline class="b" points="1250,110 1270,65 1290,85 1345,80 1350,60 1330,45 1270,20 1255,0"/>
<polyline class="b" points="0,355 40,420 120,480 125,488 60,470 10,440 0,380"/>
</g>
<g transform="translate(560,740) scale(.33333)">
<polyline class="b" points="390,0 430,20 480,35 500,60 480,90 455,115 465,140 510,155 515,175 460,190 450,205 470,225 535,230 550,265 580,275 625,265 680,290"/>
<polyline class="b" points="770,300 780,265 825,240 880,285 925,290"/>
</g>

<!-- dotted contours -->
<g transform="translate(0,50) scale(.33333)">
<polyline class="d" points="425,50 350,130 270,160 220,160 180,200 160,250 130,320 120,345 135,360 190,425 210,465 150,490 95,490 75,465 35,435 10,420"/>
<polyline class="d" points="0,130 20,180 30,240 15,290"/>
<polyline class="d" points="590,60 610,85 680,105 695,130"/>
<polyline class="d" points="670,205 680,260 700,330 705,380 720,410 740,450 755,510 765,530 800,540 860,480 870,410"/>
<polyline class="d" points="340,555 410,545 460,555 490,600 560,620 610,680 640,730 670,770 720,800 715,830 735,855 770,920 760,1000 750,1020"/>
<polyline class="d" points="330,555 290,630 240,710 190,740 120,770 20,765"/>
<polyline class="d" points="340,770 300,830 310,860"/>
<polyline class="d" points="100,870 150,870"/>
<polyline class="d" points="860,60 845,90 880,155 915,145"/>
<polyline class="d" points="940,70 925,90"/>
<polyline class="d" points="0,890 20,920"/>
<polyline class="d" points="125,955 190,1000 230,1020 345,1020 400,930 405,900"/>
<polyline class="d" points="415,920 380,1000 405,1045 440,1070"/>
<polyline class="d" points="570,1060 640,1030"/>
<polyline class="d" points="5,980 90,990 130,960"/>
<polyline class="d" points="860,630 880,680 920,690 960,670 950,740 960,830 910,900 860,940 830,1030 790,1060"/>
<polyline class="d" points="900,605 960,600"/>
<polyline class="d" points="935,395 950,480 970,560 960,670"/>
</g>
<g transform="translate(330,50) scale(.33333)">
<polyline class="d" points="230,90 260,150"/>
<polyline class="d" points="395,240 430,290 440,350 465,380 580,385 570,400 605,435 580,480 540,520 490,580"/>
<polyline class="d" points="370,175 395,240 410,270"/>
<polyline class="d" points="375,275 395,350"/>
<polyline class="d" points="410,190 450,110"/>
<polyline class="d" points="480,135 530,125 580,175 590,220"/>
<polyline class="d" points="85,240 65,330 100,370 130,410 115,490 130,530 185,545 260,535 340,530 355,490 385,440"/>
<polyline class="d" points="585,355 610,300 680,260"/>
<polyline class="d" points="695,315 640,330"/>
<polyline class="d" points="720,340 725,385"/>
<polyline class="d" points="620,260 700,220 760,180"/>
<polyline class="d" points="840,245 970,300"/>
<polyline class="d" points="830,185 870,180"/>
<polyline class="d" points="350,620 460,615"/>
<polyline class="d" points="345,670 395,720 415,800 415,870 395,920 405,990 425,1080"/>
<polyline class="d" points="245,900 280,990 340,1050"/>
<polyline class="d" points="70,885 130,880 210,880 245,900"/>
<polyline class="d" points="300,960 290,1000 330,1000"/>
<polyline class="d" points="0,1030 50,1060"/>
</g>
<g transform="translate(650,50) scale(.33333)">
<polyline class="d" points="0,130 60,150 120,165 90,210 60,250 70,290 130,350 190,430"/>
<polyline class="d" points="0,295 50,330 105,395 150,490 180,540 270,570 330,610"/>
<polyline class="d" points="150,100 235,155 290,200 400,195"/>
<polyline class="d" points="215,440 285,395 320,450 350,500 370,530 430,550 590,550 750,520 780,530"/>
<polyline class="d" points="570,50 510,65 450,40"/>
<polyline class="d" points="480,100 450,180"/>
<polyline class="d" points="600,40 640,30"/>
<polyline class="d" points="730,45 820,100 850,150 900,220 960,250 987,250"/>
<polyline class="d" points="290,795 315,850 360,850 390,865 440,885 515,910 560,930 620,910 690,900 740,950 800,965 860,945"/>
<polyline class="d" points="290,850 260,880 270,920 310,950 370,970 410,1020 450,1070"/>
<polyline class="d" points="380,655 430,640 490,650 550,700 610,710"/>
<polyline class="d" points="780,690 870,710 940,760 987,790"/>
<polyline class="d" points="760,700 690,750 650,740"/>
<polyline class="d" points="930,690 987,720"/>
<polyline class="d" points="870,820 875,880 900,910"/>
<polyline class="d" points="820,1020 900,1000 987,985"/>
<polyline class="d" points="920,590 987,640"/>
</g>
<g transform="translate(0,400) scale(.33333)">
<polyline class="d" points="340,450 430,490 500,520 580,500 590,560 530,580 450,570 400,520 370,480"/>
<polyline class="d" points="640,615 660,600 710,600 740,630 755,700 740,770 710,800 730,850 830,870 870,895 990,890"/>
<polyline class="d" points="510,250 620,240 660,230"/>
<polyline class="d" points="745,470 790,415"/>
<polyline class="d" points="745,470 745,580"/>
<polyline class="d" points="510,350 620,340 700,345 780,320 870,300"/>
<polyline class="d" points="505,350 490,320 515,275"/>
<polyline class="d" points="740,370 790,400"/>
<polyline class="d" points="430,10 470,50 540,0"/>
<polyline class="d" points="600,95 640,20"/>
<polyline class="d" points="640,140 635,220"/>
<polyline class="d" points="85,830 110,880 120,940 230,1050"/>
<polyline class="d" points="15,960 15,1040"/>
<polyline class="d" points="0,820 70,820"/>
<polyline class="d" points="850,60 820,140 830,170 870,230"/>
<polyline class="d" points="905,460 940,420 965,480 960,510"/>
</g>
<g transform="translate(330,400) scale(.33333)">
<polyline class="d" points="385,40 390,130 395,200 420,300 415,350 395,420 385,460 360,500"/>
<polyline class="d" points="430,0 450,70 470,150 490,220 480,350 505,430 490,490 495,545 550,570 580,570"/>
<polyline class="d" points="65,320 170,400 290,460 320,500"/>
<polyline class="d" points="450,505 430,530 425,600 385,650 355,680 390,720 390,800"/>
<polyline class="d" points="400,845 500,835 640,830 670,900 660,970 620,1040 580,1085"/>
<polyline class="d" points="0,825 100,860 150,900 220,970 300,985 420,995 500,1020"/>
<polyline class="d" points="180,490 130,510 95,525 105,620 120,640"/>
<polyline class="d" points="150,590 180,500"/>
</g>
<g transform="translate(650,400) scale(.33333)">
<polyline class="d" points="430,0 490,40 580,60 640,110"/>
<polyline class="d" points="785,55 785,100 810,130 905,130 960,180 960,240 985,260"/>
<polyline class="d" points="650,125 735,175 725,210 660,215 600,190 520,215 520,270 600,290 630,290 760,295 790,330 810,400 850,410 900,400 965,420"/>
<polyline class="d" points="535,350 550,430 580,470 640,470 690,430"/>
<polyline class="d" points="625,190 660,260"/>
<polyline class="d" points="840,430 850,560 820,650 780,700 750,760 740,800 735,840 715,870 660,875 590,885"/>
<polyline class="d" points="680,470 680,540 640,550 670,600 710,660 770,690"/>
<polyline class="d" points="590,905 570,950 470,975 440,1020"/>
<polyline class="d" points="240,600 270,575 305,610 280,650 250,640"/>
<polyline class="d" points="170,1045 260,1000 340,1035 350,1080"/>
<polyline class="d" points="590,1060 600,1000 650,985 710,1000 760,1040 830,1080"/>
<polyline class="d" points="830,910 760,950"/>
<polyline class="d" points="920,870 985,770"/>
<polyline class="d" points="915,750 920,870"/>
<polyline class="d" points="990,960 925,990"/>
</g>

<!-- dashed bold contours -->
<g transform="translate(650,50) scale(.33333)">
<polyline class="k" points="550,260 565,300 605,300 610,260 590,245 550,260"/>
<polyline class="k" points="830,370 850,330 950,355 987,370"/>
<polyline class="k" points="840,450 860,490 950,530 987,540"/>
</g>
<g transform="translate(330,50) scale(.33333)">
<polyline class="k" points="300,350 310,330 355,315"/>
<polyline class="k" points="365,330 380,360"/>
<polyline class="k" points="295,375 310,388 370,380"/>
<polyline class="k" points="375,75 385,105 430,85 445,70"/>
<polyline class="k" points="625,180 640,155 680,145 700,185 670,205 635,195 625,180"/>
<polyline class="k" points="600,150 630,200 680,230 730,190"/>
<polyline class="k" points="150,1005 175,965 190,985"/>
<polyline class="k" points="175,1030 185,1050"/>
<polyline class="k" points="210,1065 230,1045"/>
</g>
<g transform="translate(650,400) scale(.33333)">
<polyline class="k" points="695,340 750,345 770,385 760,410 700,405"/>
<polyline class="k" points="680,360 695,385"/>
</g>
<g transform="translate(0,400) scale(.33333)">
<polyline class="k" points="860,135 880,100 905,145"/>
</g>

<!-- station crosses and values -->
<g>
<use href="#x" x="33" y="51"/><text x="33" y="55">6.18</text>
<use href="#x" x="85" y="54"/><text x="85" y="58">6.60</text>
<use href="#x" x="136" y="56"/><text x="136" y="60">5.27</text>
<use href="#x" x="187" y="58"/><text x="187" y="62">4.13</text>
<use href="#x" x="240" y="60"/><text x="240" y="64">7.52</text>
<use href="#x" x="292" y="62"/><text x="292" y="66">6.03</text>
<use href="#x" x="343" y="63"/><text x="343" y="67">6.07</text>
<use href="#x" x="395" y="63"/><text x="395" y="67">6.10</text>
<use href="#x" x="448" y="64"/><text x="448" y="68">5.25</text>
<use href="#x" x="500" y="64"/><text x="500" y="68">5.25</text>
<use href="#x" x="553" y="64"/><text x="553" y="68">6.02</text>
<use href="#x" x="605" y="64"/><text x="605" y="68">4.71</text>
<use href="#x" x="657" y="62"/><text x="657" y="66">7.12</text>
<use href="#x" x="708" y="59"/><text x="708" y="63">7.60</text>
<use href="#x" x="760" y="56"/><text x="760" y="60">5.13</text>
<use href="#x" x="812" y="54"/><text x="812" y="58">7.10</text>
<use href="#x" x="863" y="52"/><text x="863" y="56">7.24</text>
<use href="#x" x="915" y="50"/><text x="915" y="54">7.70</text>
<use href="#x" x="967" y="49"/><text x="967" y="53">7.93</text>

<use href="#x" x="29" y="113"/><text x="29" y="117">6.22</text>
<use href="#x" x="81" y="116"/><text x="81" y="120">4.09</text>
<use href="#x" x="134" y="118"/><text x="134" y="122">3.49</text>
<use href="#x" x="186" y="121"/><text x="186" y="125">2.78</text>
<use href="#x" x="237" y="123"/><text x="237" y="127">6.02</text>
<use href="#x" x="291" y="124"/><text x="291" y="128">5.93</text>
<use href="#x" x="343" y="125"/><text x="343" y="129">6.82</text>
<use href="#x" x="395" y="125"/><text x="395" y="129">9.17</text>
<use href="#x" x="447" y="126"/><text x="447" y="130">7.21</text>
<use href="#x" x="500" y="126"/><text x="500" y="130">3.77</text>
<use href="#x" x="552" y="126"/><text x="552" y="130">8.93</text>
<use href="#x" x="603" y="126"/><text x="603" y="130">5.08</text>
<use href="#x" x="656" y="125"/><text x="656" y="129">7.11</text>
<use href="#x" x="708" y="123"/><text x="708" y="127">9.48</text>
<use href="#x" x="763" y="121"/><text x="763" y="125">7.87</text>
<use href="#x" x="814" y="119"/><text x="814" y="123">8.42</text>
<use href="#x" x="865" y="117"/><text x="865" y="121">8.51</text>
<use href="#x" x="919" y="115"/><text x="919" y="119">8.20</text>
<use href="#x" x="970" y="112"/><text x="970" y="116">7.05</text>

<use href="#x" x="25" y="177"/><text x="25" y="181">5.95</text>
<use href="#x" x="77" y="180"/><text x="77" y="184">4.72</text>
<use href="#x" x="130" y="182"/><text x="130" y="186">4.33</text>
<use href="#x" x="183" y="184"/><text x="183" y="188">4.53</text>
<use href="#x" x="235" y="187"/><text x="235" y="191">4.80</text>
<use href="#x" x="288" y="188"/><text x="288" y="192">5.24</text>
<use href="#x" x="341" y="188"/><text x="341" y="192">6.02</text>
<use href="#x" x="394" y="189"/><text x="394" y="193">9.11</text>
<use href="#x" x="447" y="190"/><text x="447" y="194">7.90</text>
<use href="#x" x="500" y="190"/><text x="500" y="194">7.45</text>
<use href="#x" x="552" y="190"/><text x="552" y="194">4.35</text>
<use href="#x" x="605" y="190"/><text x="605" y="194">3.24</text>
<use href="#x" x="657" y="189"/><text x="657" y="193">2.91</text>
<use href="#x" x="711" y="187"/><text x="711" y="191">7.78</text>
<use href="#x" x="763" y="186"/><text x="763" y="190">8.32</text>
<use href="#x" x="817" y="183"/><text x="817" y="187">8.59</text>
<use href="#x" x="869" y="182"/><text x="869" y="186">8.85</text>
<use href="#x" x="922" y="179"/><text x="922" y="183">9.93</text>
<use href="#x" x="975" y="175"/><text x="975" y="179">10.1</text>

<use href="#x" x="22" y="241"/><text x="22" y="245">3.19</text>
<use href="#x" x="75" y="244"/><text x="75" y="248">3.33</text>
<use href="#x" x="128" y="246"/><text x="128" y="250">6.84</text>
<use href="#x" x="181" y="249"/><text x="181" y="253">5.04</text>
<use href="#x" x="233" y="251"/><text x="233" y="255">2.56</text>
<use href="#x" x="287" y="252"/><text x="287" y="256">4.79</text>
<use href="#x" x="341" y="253"/><text x="341" y="257">5.35</text>
<use href="#x" x="394" y="254"/><text x="394" y="258">6.17</text>
<use href="#x" x="447" y="254"/><text x="447" y="258">4.59</text>
<use href="#x" x="500" y="254"/><text x="500" y="258">3.12</text>
<use href="#x" x="553" y="254"/><text x="553" y="258">3.67</text>
<use href="#x" x="605" y="254"/><text x="605" y="258">3.14</text>
<use href="#x" x="659" y="253"/><text x="659" y="257">2.90</text>
<use href="#x" x="712" y="252"/><text x="712" y="256">3.85</text>
<use href="#x" x="765" y="250"/><text x="765" y="254">5.68</text>
<use href="#x" x="819" y="247"/><text x="819" y="251">6.52</text>
<use href="#x" x="872" y="245"/><text x="872" y="249">6.73</text>
<use href="#x" x="925" y="243"/><text x="925" y="247">6.85</text>
<use href="#x" x="975" y="240"/><text x="975" y="244">9.13</text>

<use href="#x" x="18" y="305"/><text x="18" y="309">4.88</text>
<use href="#x" x="72" y="308"/><text x="72" y="312">5.92</text>
<use href="#x" x="125" y="311"/><text x="125" y="315">5.90</text>
<use href="#x" x="178" y="313"/><text x="178" y="317">5.96</text>
<use href="#x" x="232" y="315"/><text x="232" y="319">5.34</text>
<use href="#x" x="285" y="316"/><text x="285" y="320">3.91</text>
<use href="#x" x="339" y="316"/><text x="339" y="320">5.92</text>
<use href="#x" x="393" y="317"/><text x="393" y="321">6.03</text>
<use href="#x" x="447" y="318"/><text x="447" y="322">6.03</text>
<use href="#x" x="500" y="318"/><text x="500" y="322">0.940</text>
<use href="#x" x="554" y="318"/><text x="554" y="322">2.02</text>
<use href="#x" x="607" y="318"/><text x="607" y="322">4.33</text>
<use href="#x" x="660" y="317"/><text x="660" y="321">1.21</text>
<use href="#x" x="714" y="316"/><text x="714" y="320">3.70</text>
<use href="#x" x="768" y="314"/><text x="768" y="318">6.00</text>
<use href="#x" x="821" y="312"/><text x="821" y="316">4.28</text>
<use href="#x" x="875" y="309"/><text x="875" y="313">4.57</text>
<use href="#x" x="929" y="307"/><text x="929" y="311">4.14</text>
<use href="#x" x="979" y="303"/><text x="979" y="307">5.12</text>

<use href="#x" x="14" y="369"/><text x="14" y="373">5.47</text>
<use href="#x" x="68" y="372"/><text x="68" y="376">4.92</text>
<use href="#x" x="121" y="374"/><text x="121" y="378">5.92</text>
<use href="#x" x="176" y="377"/><text x="176" y="381">5.97</text>
<use href="#x" x="229" y="378"/><text x="229" y="382">5.59</text>
<use href="#x" x="283" y="379"/><text x="283" y="383">4.95</text>
<use href="#x" x="338" y="380"/><text x="338" y="384">7.37</text>
<use href="#x" x="392" y="382"/><text x="392" y="386">10.4</text>
<use href="#x" x="446" y="382"/><text x="446" y="386">7.11</text>
<use href="#x" x="500" y="382"/><text x="500" y="386">0.726</text>
<use href="#x" x="554" y="381"/><text x="554" y="385">1.19</text>
<use href="#x" x="608" y="381"/><text x="608" y="385">1.76</text>
<use href="#x" x="662" y="381"/><text x="662" y="385">1.24</text>
<use href="#x" x="716" y="379"/><text x="716" y="383">2.00</text>
<use href="#x" x="770" y="378"/><text x="770" y="382">4.45</text>
<use href="#x" x="824" y="376"/><text x="824" y="380">5.77</text>
<use href="#x" x="878" y="373"/><text x="878" y="377">5.93</text>
<use href="#x" x="932" y="370"/><text x="932" y="374">5.71</text>

<use href="#x" x="10" y="433"/><text x="10" y="437">3.31</text>
<use href="#x" x="65" y="436"/><text x="65" y="440">2.43</text>
<use href="#x" x="119" y="438"/><text x="119" y="442">3.39</text>
<use href="#x" x="173" y="441"/><text x="173" y="445">4.98</text>
<use href="#x" x="227" y="442"/><text x="227" y="446">5.50</text>
<use href="#x" x="281" y="444"/><text x="281" y="448">9.77</text>
<use href="#x" x="336" y="445"/><text x="336" y="449">7.24</text>
<use href="#x" x="391" y="445"/><text x="391" y="449">8.12</text>
<use href="#x" x="446" y="445"/><text x="446" y="449">8.19</text>
<use href="#x" x="500" y="445"/><text x="500" y="449">3.71</text>
<use href="#x" x="555" y="445"/><text x="555" y="449">0.701</text>
<use href="#x" x="609" y="445"/><text x="609" y="449">0.223</text>
<use href="#x" x="664" y="445"/><text x="664" y="449">0.478</text>
<use href="#x" x="718" y="444"/><text x="718" y="448">1.54</text>
<use href="#x" x="771" y="442"/><text x="771" y="446">3.01</text>
<use href="#x" x="826" y="440"/><text x="826" y="444">4.15</text>
<use href="#x" x="880" y="437"/><text x="880" y="441">5.32</text>
<use href="#x" x="934" y="434"/><text x="934" y="438">8.10</text>

<use href="#x" x="5" y="497"/><text x="5" y="501">1.21</text>
<use href="#x" x="61" y="500"/><text x="61" y="504">1.19</text>
<use href="#x" x="117" y="502"/><text x="117" y="506">3.53</text>
<use href="#x" x="171" y="503"/><text x="171" y="507">5.79</text>
<use href="#x" x="225" y="506"/><text x="225" y="510">5.08</text>
<use href="#x" x="280" y="508"/><text x="280" y="512">4.94</text>
<use href="#x" x="335" y="509"/><text x="335" y="513">7.20</text>
<use href="#x" x="390" y="510"/><text x="390" y="514">9.09</text>
<use href="#x" x="446" y="510"/><text x="446" y="514">8.20</text>
<use href="#x" x="500" y="510"/><text x="500" y="514">8.50</text>
<use href="#x" x="555" y="510"/><text x="555" y="514">1.24</text>
<use href="#x" x="610" y="510"/><text x="610" y="514">1.63</text>
<use href="#x" x="665" y="509"/><text x="665" y="513">1.49</text>
<use href="#x" x="720" y="508"/><text x="720" y="512">0.529</text>
<use href="#x" x="773" y="506"/><text x="773" y="510">2.82</text>
<use href="#x" x="829" y="504"/><text x="829" y="508">5.73</text>
<use href="#x" x="884" y="501"/><text x="884" y="505">8.63</text>
<use href="#x" x="938" y="498"/><text x="938" y="502">6.37</text>

<use href="#x" x="5" y="560"/><text x="5" y="564">.853</text>
<use href="#x" x="59" y="564"/><text x="59" y="568">1.39</text>
<use href="#x" x="113" y="566"/><text x="113" y="570">3.82</text>
<use href="#x" x="168" y="568"/><text x="168" y="572">5.88</text>
<use href="#x" x="223" y="570"/><text x="223" y="574">4.14</text>
<use href="#x" x="280" y="571"/><text x="280" y="575">6.24</text>
<use href="#x" x="335" y="573"/><text x="335" y="577">7.29</text>
<use href="#x" x="390" y="574"/><text x="390" y="578">7.87</text>
<use href="#x" x="446" y="574"/><text x="446" y="578">7.32</text>
<use href="#x" x="500" y="574"/><text x="500" y="578">5.89</text>
<use href="#x" x="556" y="573"/><text x="556" y="577">2.54</text>
<use href="#x" x="611" y="573"/><text x="611" y="577">2.92</text>
<use href="#x" x="666" y="572"/><text x="666" y="576">3.34</text>
<use href="#x" x="721" y="571"/><text x="721" y="575">3.40</text>
<use href="#x" x="776" y="569"/><text x="776" y="573">3.69</text>
<use href="#x" x="831" y="567"/><text x="831" y="571">4.14</text>
<use href="#x" x="886" y="565"/><text x="886" y="569">5.18</text>
<use href="#x" x="941" y="561"/><text x="941" y="565">2.26</text>

<use href="#x" x="0" y="625"/><text x="0" y="629">.16</text>
<use href="#x" x="55" y="628"/><text x="55" y="632">1.61</text>
<use href="#x" x="111" y="630"/><text x="111" y="634">1.45</text>
<use href="#x" x="166" y="632"/><text x="166" y="636">2.56</text>
<use href="#x" x="222" y="634"/><text x="222" y="638">3.53</text>
<use href="#x" x="278" y="636"/><text x="278" y="640">5.56</text>
<use href="#x" x="333" y="637"/><text x="333" y="641">5.89</text>
<use href="#x" x="389" y="637"/><text x="389" y="641">6.41</text>
<use href="#x" x="445" y="638"/><text x="445" y="642">5.34</text>
<use href="#x" x="500" y="638"/><text x="500" y="642">4.03</text>
<use href="#x" x="556" y="637"/><text x="556" y="641">2.95</text>
<use href="#x" x="612" y="637"/><text x="612" y="641">3.57</text>
<use href="#x" x="667" y="636"/><text x="667" y="640">3.51</text>
<use href="#x" x="722" y="635"/><text x="722" y="639">4.15</text>
<use href="#x" x="778" y="633"/><text x="778" y="637">4.10</text>
<use href="#x" x="834" y="631"/><text x="834" y="635">3.51</text>
<use href="#x" x="889" y="628"/><text x="889" y="632">4.61</text>
<use href="#x" x="945" y="625"/><text x="945" y="629">5.03</text>

<use href="#x" x="-3" y="688"/><text x="-3" y="692">.75</text>
<use href="#x" x="52" y="691"/><text x="52" y="695">3.50</text>
<use href="#x" x="108" y="694"/><text x="108" y="698">2.09</text>
<use href="#x" x="164" y="696"/><text x="164" y="700">3.11</text>
<use href="#x" x="220" y="698"/><text x="220" y="702">3.31</text>
<use href="#x" x="276" y="699"/><text x="276" y="703">4.50</text>
<use href="#x" x="333" y="701"/><text x="333" y="705">4.67</text>
<use href="#x" x="388" y="701"/><text x="388" y="705">5.41</text>
<use href="#x" x="445" y="702"/><text x="445" y="706">5.40</text>
<use href="#x" x="500" y="702"/><text x="500" y="706">6.08</text>
<use href="#x" x="557" y="702"/><text x="557" y="706">4.84</text>
<use href="#x" x="613" y="701"/><text x="613" y="705">3.27</text>
<use href="#x" x="668" y="700"/><text x="668" y="704">2.96</text>
<use href="#x" x="724" y="698"/><text x="724" y="702">3.46</text>
<use href="#x" x="780" y="697"/><text x="780" y="701">3.08</text>
<use href="#x" x="836" y="695"/><text x="836" y="699">4.61</text>
<use href="#x" x="892" y="692"/><text x="892" y="696">5.57</text>
<use href="#x" x="948" y="689"/><text x="948" y="693">6.94</text>

<use href="#x" x="48" y="755"/><text x="48" y="759">6.02</text>
<use href="#x" x="105" y="758"/><text x="105" y="762">4.85</text>
<use href="#x" x="161" y="760"/><text x="161" y="764">3.00</text>
<use href="#x" x="219" y="762"/><text x="219" y="766">3.49</text>
<use href="#x" x="275" y="763"/><text x="275" y="767">2.10</text>
<use href="#x" x="331" y="764"/><text x="331" y="768">3.54</text>
<use href="#x" x="388" y="765"/><text x="388" y="769">2.66</text>
<use href="#x" x="444" y="765"/><text x="444" y="769">3.26</text>
<use href="#x" x="500" y="766"/><text x="500" y="770">4.67</text>
<use href="#x" x="557" y="765"/><text x="557" y="769">3.36</text>
<use href="#x" x="613" y="765"/><text x="613" y="769">4.19</text>
<use href="#x" x="670" y="763"/><text x="670" y="767">3.79</text>
<use href="#x" x="727" y="763"/><text x="727" y="767">5.09</text>
<use href="#x" x="783" y="761"/><text x="783" y="765">3.53</text>
<use href="#x" x="840" y="758"/><text x="840" y="762">6.47</text>
<use href="#x" x="897" y="756"/><text x="897" y="760">2.23</text>
<use href="#x" x="952" y="754"/><text x="952" y="758">6.22</text>
</g>

<!-- contour labels -->
<g>
<text class="bt" transform="translate(137,77) rotate(-25)" y="6">5</text>
<text class="bt" transform="translate(213,79)" y="6">5</text>
<text class="bt" transform="translate(15,382)" y="6">5</text>
<text class="bt" transform="translate(335,108) rotate(85)" y="5">7.5</text>
<text class="bt" transform="translate(475,102) rotate(-25)" y="6">5</text>
<text class="bt" transform="translate(462,300) rotate(90)" y="5">5</text>
<text class="bt" transform="translate(350,358) rotate(-75)" y="5">7.5</text>
<text class="bt" transform="translate(652,92) rotate(35)" y="5">7.5</text>
<text class="bt" transform="translate(710,87) rotate(35)" y="5">7.5</text>
<text class="bt" transform="translate(877,65)" y="6">7.5</text>
<text class="bt" transform="translate(923,192) rotate(70)" y="5">10</text>
<text class="bt" transform="translate(918,405) rotate(-65)" y="5">7.5</text>
<text class="bt" transform="translate(255,485)" y="6">5</text>
<text class="bt" transform="translate(130,572) rotate(30)" y="6">5</text>
<text class="bt" transform="translate(13,673)" y="6">5</text>
<text class="bt" transform="translate(850,532) rotate(30)" y="5">7.5</text>
<text class="bt" transform="translate(946,530)" y="6">5</text>
<text class="bt" transform="translate(890,683) rotate(-60)" y="5">5</text>
<text class="bt" transform="translate(960,733) rotate(-70)" y="5">5</text>
</g>

<!-- header -->
<rect x="0.5" y="0.5" width="501" height="43" fill="#b4b4b4" stroke="#222" stroke-width="1"/>
<text x="4" y="17" textLength="426" lengthAdjust="spacing" style="text-anchor:start;font-size:14px">ECMWF-INDEX-ANAL LCL-Height (m) Tuesday 14-10-2025 04:30</text>
<text x="4" y="37" textLength="489" lengthAdjust="spacing" style="text-anchor:start;font-size:14px;fill:#3a3a3a">ECMWF-INDEX-ANAL WindShear_ (m/s) 0-1km Tuesday 14-10-2025 04:30</text>

<!-- legend -->
<rect x="572" y="837" width="405" height="60" fill="#999"/>
<text x="640" y="857" style="font-size:12px">ECMWF-INDEX-ANAL</text>
<text x="640" y="873" style="font-size:12px">LCL-Height</text>
<text x="640" y="890" style="font-size:12px">m</text>
<g stroke="#000" stroke-width="1">
<rect x="709.5" y="844.5" width="21" height="22" fill="#fff"/>
<rect x="730.5" y="844.5" width="21" height="22" fill="#aaaaff"/>
<rect x="751.5" y="844.5" width="21" height="22" fill="#aa55ff"/>
<rect x="772.5" y="844.5" width="21" height="22" fill="#aa00ff"/>
<rect x="793.5" y="844.5" width="21" height="22" fill="#d2007f"/>
<rect x="814.5" y="844.5" width="21" height="22" fill="#ff0000"/>
<rect x="835.5" y="844.5" width="21" height="22" fill="#ffaa00"/>
<rect x="856.5" y="844.5" width="21" height="22" fill="#ffff00"/>
<rect x="877.5" y="844.5" width="21" height="22" fill="#aaff00"/>
<rect x="898.5" y="844.5" width="21" height="22" fill="#55aa00"/>
<rect x="919.5" y="844.5" width="21" height="22" fill="#00aa7f"/>
<rect x="940.5" y="844.5" width="21" height="22" fill="#00aaff"/>
<path d="M730.5 867v5M772.5 867v5M814.5 867v5M856.5 867v5M898.5 867v5M940.5 867v5" fill="none"/>
</g>
<text x="730" y="886" style="font-size:12px">100</text>
<text x="772" y="886" style="font-size:12px">400</text>
<text x="814" y="886" style="font-size:12px">800</text>
<text x="856" y="886" style="font-size:12px">1200</text>
<text x="898" y="886" style="font-size:12px">1600</text>
<text x="940" y="886" style="font-size:12px">2000</text>
</svg>
</body></html>
